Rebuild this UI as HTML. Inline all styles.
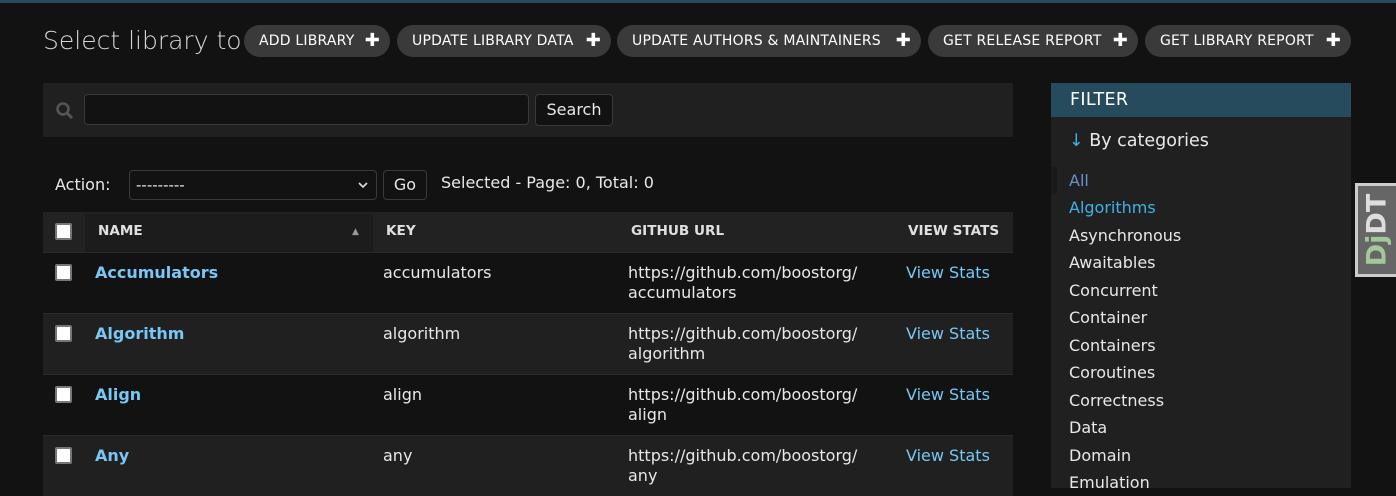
<!DOCTYPE html>
<html><head><meta charset="utf-8"><style>
*{box-sizing:border-box;margin:0;padding:0}
body{width:1396px;height:488px;overflow:hidden;background:#121212;color:#e8e8e8;font-family:"DejaVu Sans","Liberation Sans",sans-serif;font-size:16px;position:relative}
.abs{position:absolute}
h1{position:absolute;left:43px;top:26px;font-size:25px;font-weight:200;color:#d8d8d8;white-space:nowrap}
.btn{position:absolute;top:25px;height:32px;border-radius:16px;background:#3a3a3a;color:#fff;font-size:14px;line-height:32px;padding-left:15px;letter-spacing:0.2px;white-space:nowrap}
.btn b{font-size:18px;position:absolute;right:10px;top:0}
.search{left:43px;top:83px;width:970px;height:54px;background:#202020}
.inp{position:absolute;left:84px;top:94px;width:445px;height:31px;background:#121212;border:1px solid #3a3a3a;border-radius:4px}
.sb{position:absolute;left:535px;top:94px;width:78px;height:32px;background:#121212;border:1px solid #3a3a3a;border-radius:4px;font-size:16px;line-height:30px;text-align:center}
.sel{position:absolute;left:129px;top:170px;width:248px;height:30px;background:#121212;border:1px solid #3a3a3a;border-radius:4px;padding-left:6px;line-height:28px;font-size:15px}
.go{position:absolute;left:383px;top:170px;width:44px;height:30px;border:1px solid #3a3a3a;border-radius:4px;text-align:center;line-height:28px;font-size:16px}
.cb{position:absolute;width:17px;height:17px;background:#fff;border:2px solid #777;border-radius:2px;left:55px}
.row{position:absolute;left:43px;width:970px;height:61px;border-top:1px solid #2a2a2a}
.nm{position:absolute;left:95px;color:#79c7f5;font-weight:bold;font-size:16px}
.k{position:absolute;left:383px;font-size:16px}
.u{position:absolute;left:628px;font-size:16px;line-height:20px}
.v{position:absolute;left:906px;color:#79c7f5;font-size:16px}
.th{position:absolute;top:223px;font-weight:bold;font-size:13.6px;color:#e0e0e0}
.filt{left:1051px;top:83px;width:300px;height:405px;background:#202020}
.fh{left:1051px;top:83px;width:300px;height:34px;background:#264b5d;color:#fff;font-size:17.5px;line-height:34px;padding-left:19px;letter-spacing:0.3px}
.li{position:absolute;left:1069px;font-size:16px;color:#e8e8e8}
</style></head><body>
<div class="abs" style="left:0;top:0;width:1396px;height:3px;background:#264b5d"></div>
<h1>Select library to</h1>
<div class="btn" style="left:244px;width:146px">ADD LIBRARY<b>✚</b></div>
<div class="btn" style="left:397px;width:214px">UPDATE LIBRARY DATA<b>✚</b></div>
<div class="btn" style="left:617px;width:304px">UPDATE AUTHORS &amp; MAINTAINERS<b>✚</b></div>
<div class="btn" style="left:928px;width:210px">GET RELEASE REPORT<b>✚</b></div>
<div class="btn" style="left:1145px;width:206px">GET LIBRARY REPORT<b>✚</b></div>

<div class="abs search"></div>
<svg class="abs" style="left:55px;top:101px" width="20" height="20" viewBox="0 0 20 20"><circle cx="8" cy="8" r="5.5" stroke="#555" stroke-width="2.6" fill="none"/><path d="M12 12l5 5" stroke="#555" stroke-width="3"/></svg>
<div class="inp"></div>
<div class="sb">Search</div>

<div class="abs" style="left:55px;top:175px;font-size:16px">Action:</div>
<div class="sel">---------<svg style="position:absolute;right:8px;top:11px" width="10" height="7" viewBox="0 0 10 7"><path d="M1 1l4 4 4-4" stroke="#ddd" stroke-width="1.6" fill="none"/></svg></div>
<div class="go">Go</div>
<div class="abs" style="left:441px;top:173px;font-size:16px">Selected - Page: 0, Total: 0</div>

<div class="abs" style="left:43px;top:212px;width:970px;height:40px;background:#222"></div>
<div class="abs" style="left:85px;top:214px;width:288px;height:38px;background:#1c1c1c"></div>
<div class="cb" style="top:223px"></div>
<div class="th" style="left:98px">NAME</div>
<div class="abs" style="left:352px;top:227px;font-size:9px;color:#999">▲</div>
<div class="th" style="left:386px">KEY</div>
<div class="th" style="left:631px">GITHUB URL</div>
<div class="th" style="left:908px">VIEW STATS</div>

<div class="row" style="top:252px;background:#121212"></div>
<div class="row" style="top:313px;background:#202020"></div>
<div class="row" style="top:374px;background:#121212"></div>
<div class="row" style="top:435px;background:#202020"></div>

<div class="cb" style="top:264px"></div><div class="nm" style="top:263px">Accumulators</div><div class="k" style="top:263px">accumulators</div><div class="u" style="top:263px">https://github.com/boostorg/<br>accumulators</div><div class="v" style="top:263px">View Stats</div>
<div class="cb" style="top:325px"></div><div class="nm" style="top:324px">Algorithm</div><div class="k" style="top:324px">algorithm</div><div class="u" style="top:324px">https://github.com/boostorg/<br>algorithm</div><div class="v" style="top:324px">View Stats</div>
<div class="cb" style="top:386px"></div><div class="nm" style="top:385px">Align</div><div class="k" style="top:385px">align</div><div class="u" style="top:385px">https://github.com/boostorg/<br>align</div><div class="v" style="top:385px">View Stats</div>
<div class="cb" style="top:447px"></div><div class="nm" style="top:446px">Any</div><div class="k" style="top:446px">any</div><div class="u" style="top:446px">https://github.com/boostorg/<br>any</div><div class="v" style="top:446px">View Stats</div>

<div class="abs filt"></div>
<div class="abs fh">FILTER</div>
<div class="abs" style="left:1069px;top:131px;font-size:17.5px"><span style="color:#3fb3e8">↓</span> By categories</div>
<div class="abs" style="left:1051px;top:167px;width:6px;height:27px;background:#1a1a1a"></div>
<div class="li" style="top:171px;color:#6a8fcf">All</div>
<div class="li" style="top:198px;color:#3fb3e8">Algorithms</div>
<div class="li" style="top:226px">Asynchronous</div>
<div class="li" style="top:253px">Awaitables</div>
<div class="li" style="top:281px">Concurrent</div>
<div class="li" style="top:308px">Container</div>
<div class="li" style="top:336px">Containers</div>
<div class="li" style="top:363px">Coroutines</div>
<div class="li" style="top:391px">Correctness</div>
<div class="li" style="top:418px">Data</div>
<div class="li" style="top:446px">Domain</div>
<div class="li" style="top:473px">Emulation</div>

<div class="abs" style="left:1355px;top:183px;width:41px;height:94px;background:#ccc;padding:3px 0 3px 3px"><div style="width:100%;height:100%;background:#666;position:relative"><div style="position:absolute;left:50%;top:50%;transform:translate(-50%,-50%) rotate(-90deg);font-weight:bold;font-size:27px;white-space:nowrap"><span style="color:#a5c89a">Dj</span><span style="color:#ddd">DT</span></div></div></div>
</body></html>
